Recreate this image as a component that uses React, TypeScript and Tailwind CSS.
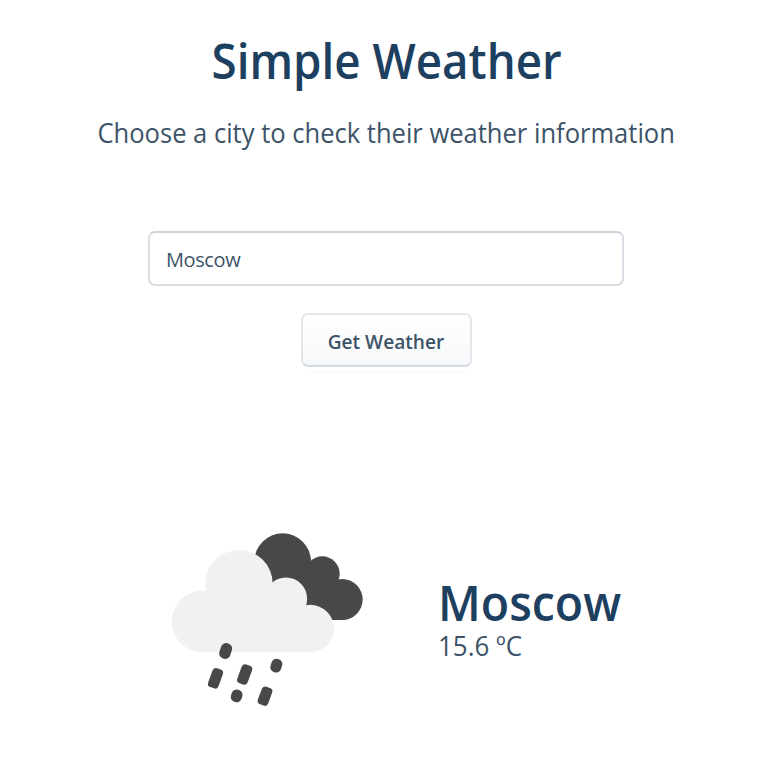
function RainCloud() {
  return (
    <svg viewBox="0 0 645 570" width="215" height="190" className="block shrink-0" aria-label="Rain">
      <g fill="#48484a">
        <circle cx="368" cy="110" r="85" />
        <circle cx="487" cy="146" r="52" />
        <circle cx="546.5" cy="223.5" r="61.5" />
        <path d="M330 100H452V112L487 146L538 165V285H400Z" />
        <path d="M400 200H546.5V285H400Z" />
      </g>
      <g fill="#f1f1f1">
        <circle cx="127" cy="289.5" r="92" />
        <circle cx="237" cy="176" r="101" />
        <circle cx="378" cy="221" r="63.5" />
        <circle cx="451" cy="310.5" r="71" />
        <path d="M127 230L137 198V176H338L378 200L438 240L451 300V381.5H127Z" />
      </g>
      <g fill="#48484a">
        <rect x="-17" y="-23.5" width="34" height="47" rx="15" transform="translate(197 378) rotate(18)" />
        <rect x="-16.5" y="-30" width="33" height="60" rx="11" transform="translate(166.500 460) rotate(20)" />
        <rect x="-16.5" y="-30" width="33" height="60" rx="11" transform="translate(254 448.500) rotate(20)" />
        <rect x="-16.5" y="-20.5" width="33" height="41" rx="15" transform="translate(349 422) rotate(18)" />
        <rect x="-16.5" y="-19" width="33" height="38" rx="15" transform="translate(230 512.500) rotate(18)" />
        <rect x="-16.5" y="-28" width="33" height="56" rx="11" transform="translate(315 513.500) rotate(20)" />
      </g>
    </svg>
  );
}

export default function App() {
  return (
    <main className="flex h-[765px] w-[772px] flex-col items-center overflow-hidden bg-white font-['Open_Sans','Noto_Sans',sans-serif] text-[#3d5368]">
      <h1 className="mt-[29px] pl-[2px] text-[49px] leading-[62px] font-semibold whitespace-nowrap text-[#1d4060]">
        <span className="inline-block scale-x-[0.933]">Simple Weather</span>
      </h1>
      <p className="mt-[22px] text-[27px] leading-10 whitespace-nowrap">
        <span className="inline-block scale-x-[0.946]">Choose a city to check their weather information</span>
      </p>
      <form className="mt-[78px] flex flex-col items-center" onSubmit={(e) => e.preventDefault()}>
        <input
          aria-label="City"
          defaultValue="Moscow"
          className="block h-[55px] w-[476px] rounded-[7px] border-2 border-[#d9dce2] border-t-[#cfd3da] bg-white px-4 pt-[2px] text-[20px] tracking-[-0.4px] outline-none"
        />
        <button className="mt-[27px] h-[54px] w-[171px] rounded-[7px] border-2 border-[#e3e6ea] border-b-[#d5d9e0] bg-linear-to-b from-white to-[#f7f8f9] pt-[3px] text-[20px] font-semibold whitespace-nowrap">
          <span className="inline-block scale-x-[0.955]">Get Weather</span>
        </button>
        <div className="mt-[5px] h-px w-40 bg-[#f7f7f7]" />
      </form>
      <section className="mt-[152px] flex w-[452px] gap-[63px]">
        <RainCloud />
        <div className="pt-[55px]">
          <h2 className="text-[49px] leading-[44px] font-semibold text-[#1d4060]">
            <span className="inline-block origin-left scale-x-[0.948]">Moscow</span>
          </h2>
          <p className="mt-[6px] text-[27px] leading-8 whitespace-nowrap">
            <span className="inline-block origin-left scale-x-[0.96]">15.6 ºC</span>
          </p>
        </div>
      </section>
    </main>
  );
}
